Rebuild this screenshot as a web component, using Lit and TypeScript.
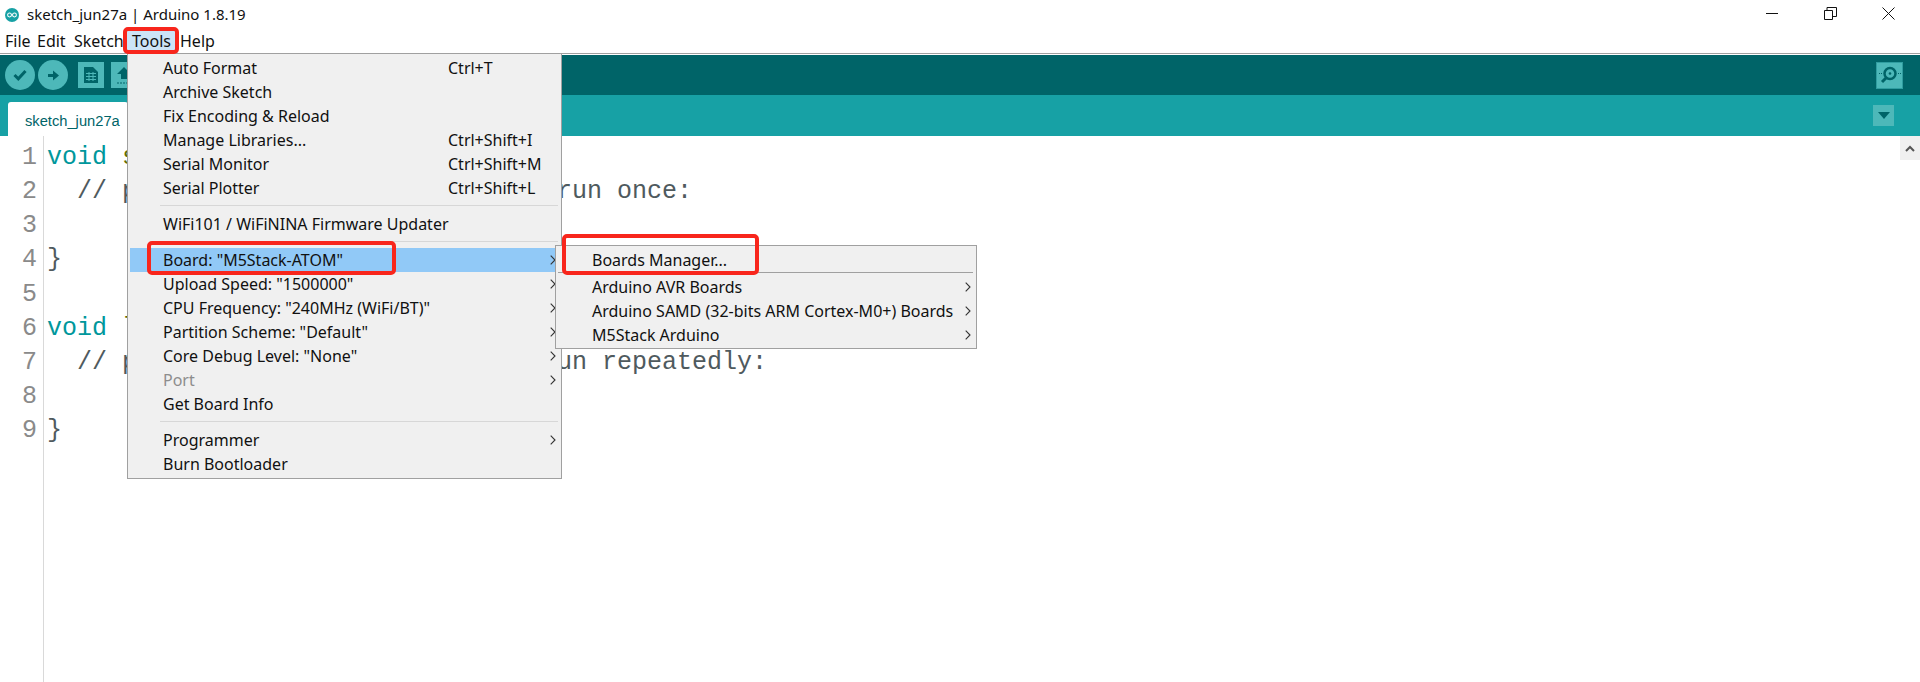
import { LitElement, html, css, svg } from "lit";
import { customElement } from "lit/decorators.js";

type Item = { t?: string; k?: string; sub?: boolean; sep?: boolean; hl?: boolean; dis?: boolean };

const TOOLS: Item[] = [
  { t: "Auto Format", k: "Ctrl+T" },
  { t: "Archive Sketch" },
  { t: "Fix Encoding & Reload" },
  { t: "Manage Libraries...", k: "Ctrl+Shift+I" },
  { t: "Serial Monitor", k: "Ctrl+Shift+M" },
  { t: "Serial Plotter", k: "Ctrl+Shift+L" },
  { sep: true },
  { t: "WiFi101 / WiFiNINA Firmware Updater" },
  { sep: true },
  { t: 'Board: "M5Stack-ATOM"', sub: true, hl: true },
  { t: 'Upload Speed: "1500000"', sub: true },
  { t: 'CPU Frequency: "240MHz (WiFi/BT)"', sub: true },
  { t: 'Partition Scheme: "Default"', sub: true },
  { t: 'Core Debug Level: "None"', sub: true },
  { t: "Port", sub: true, dis: true },
  { t: "Get Board Info" },
  { sep: true },
  { t: "Programmer", sub: true },
  { t: "Burn Bootloader" },
];

const BOARDS: Item[] = [
  { t: "Boards Manager..." },
  { sep: true },
  { t: "Arduino AVR Boards", sub: true },
  { t: "Arduino SAMD (32-bits ARM Cortex-M0+) Boards", sub: true },
  { t: "M5Stack Arduino", sub: true },
];

const chevron = svg`<path d="M.7.7l4.3 4.3L.7 9.300" fill="none" stroke="currentColor" stroke-width="1.100"/>`;

@customElement("app-root")
export class AppRoot extends LitElement {
  static styles = css`
    :host { display: block; position: relative; width: 1920px; height: 682px; overflow: hidden; background: #fff; font-family: "Noto Sans", sans-serif; color: #111; }
    .titlebar { height: 29px; display: flex; align-items: center; }
    .logo { margin-left: 5px; width: 14px; height: 14px; }
    .title { margin-left: 8px; font-size: 15px; line-height: 29px; }
    .spacer { flex: 1; }
    .winbtn { display: block; }
    .winbtns { display: flex; align-items: center; gap: 45px; margin-right: 25px; margin-top: -2px; }
    .menubar { height: 24px; display: flex; font-size: 16px; line-height: 24px; padding-left: 5px; border-bottom: 1px solid #a0a0a0; }
    .menubar span { display: block; }
    .m-file { width: 32px; } .m-edit { width: 37px; } .m-sketch { width: 50px; }
    .m-tools { width: 54px; padding-left: 8px; margin-right: 2px; background: #cce4f7; box-sizing: border-box; }
    .gap { height: 1px; }
    .toolbar { height: 40px; background: #006468; display: flex; align-items: center; padding-left: 5px; }
    .round { width: 30px; height: 30px; border-radius: 50%; background: #4db8b9; margin-right: 3px; display: flex; align-items: center; justify-content: center; }
    .sq { width: 26px; height: 26px; background: #4db8b9; margin-left: 7px; display: flex; align-items: center; justify-content: center; }
    .sermon { width: 27px; height: 27px; background: #4db8b9; margin-right: 17px; display: flex; align-items: center; justify-content: center; border: 1px solid #2f9da0; box-sizing: border-box; }
    .tabbar { height: 41px; background: #17a1a5; display: flex; align-items: flex-end; }
    .tab { margin-left: 8px; width: 120px; height: 34px; background: #fff; border-radius: 3px 3px 0 0; color: #006468; font: 14.700px/34px "Liberation Sans", sans-serif; padding: 2px 0 0 17px; box-sizing: border-box; white-space: nowrap; }
    .tabmenu { width: 21px; height: 21px; background: #4db8b9; margin: 0 26px 10px 0; display: flex; align-items: center; justify-content: center; }
    .editor { display: flex; height: 546px; }
    .gutter { width: 43px; border-right: 1px solid #d9d9d9; padding-top: 5px; flex: none; }
    .num { height: 34.150px; font: 25px/34.150px "Liberation Mono", monospace; color: #8a8a8a; text-align: right; padding-right: 6px; }
    .code { flex: 1; padding: 5px 0 0 3px; font: 25px/34.150px "Liberation Mono", monospace; color: #4f5a5e; white-space: pre; }
    .line { height: 34.150px; }
    .kw { color: #00979c; } .fn { color: #5e6d03; }
    .scroll { width: 20px; height: 24px; background: #f0f0f0; display: flex; align-items: center; justify-content: center; flex: none; }
    .menu { position: absolute; background: #f0f0f0; border: 1px solid #a0a0a0; box-sizing: border-box; font-size: 16px; color: #111; }
    .tools { left: 127px; top: 53px; width: 435px; height: 426px; padding: 2px 2px 0 2px; }
    .boards { left: 555px; top: 245px; width: 422px; height: 104px; padding: 2px 2px 0 2px; }
    .row { height: 24px; line-height: 24px; padding-left: 33px; position: relative; white-space: nowrap; }
    .row.hl { background: #91c9f7; }
    .row.dis { color: #8d8d8d; }
    .key { position: absolute; left: 318px; top: 0; }
    .boards .row { padding-left: 34px; }
    .chev { position: absolute; right: 3px; top: 7px; width: 6px; height: 10px; color: #333; }
    .sep { height: 1px; background: #d7d7d7; margin: 5px 1px 6px 30px; }
    .boards .sep { margin: 0 1px 2px 0; background: #a0a0a0; }
    .mark { position: absolute; border: 4px solid #f8261c; border-radius: 5px; box-sizing: border-box; pointer-events: none; }
    .mark.a { left: 123px; top: 27px; width: 56px; height: 27px; }
    .mark.b { left: 147px; top: 241px; width: 249px; height: 34px; }
    .mark.c { left: 562px; top: 234px; width: 197px; height: 41px; }
  `;

  private rows(items: Item[]) {
    return items.map((i) =>
      i.sep
        ? html`<div class="sep"></div>`
        : html`<div class="row ${i.hl ? "hl" : ""} ${i.dis ? "dis" : ""}">
            <span>${i.t}</span>
            ${i.k ? html`<span class="key">${i.k}</span>` : ""}
            ${i.sub ? html`<svg class="chev" viewBox="0 0 6 10">${chevron}</svg>` : ""}
          </div>`
    );
  }

  render() {
    return html`
      <div class="titlebar">
        <svg class="logo" viewBox="0 0 16 16">
          <circle cx="8" cy="8" r="8" fill="#17a1a5"/>
          <circle cx="5.200" cy="8" r="2.200" fill="none" stroke="#fff" stroke-width="1.200"/>
          <circle cx="10.800" cy="8" r="2.200" fill="none" stroke="#fff" stroke-width="1.200"/>
        </svg>
        <span class="title">sketch_jun27a | Arduino 1.8.19</span>
        <span class="spacer"></span>
        <div class="winbtns">
          <svg class="winbtn" width="13" height="13" viewBox="0 0 13 13"><path d="M0 6.500h12" stroke="#111" fill="none"/></svg>
          <svg class="winbtn" width="13" height="13" viewBox="0 0 13 13"><path d="M.5 3.500h8v9h-8zM3 3.500V.5h9.500v9h-4" stroke="#111" fill="none"/></svg>
          <svg class="winbtn" width="13" height="13" viewBox="0 0 13 13"><path d="M.5.5l12 12M12.500.5l-12 12" stroke="#111" fill="none"/></svg>
        </div>
      </div>
      <div class="menubar">
        <span class="m-file">File</span><span class="m-edit">Edit</span><span class="m-sketch">Sketch</span><span class="m-tools">Tools</span><span>Help</span>
      </div>
      <div class="gap"></div>
      <div class="toolbar">
        <div class="round"><svg width="14" height="12" viewBox="0 0 14 12"><path d="M1.500 6l3.800 3.800L12.500 2" fill="none" stroke="#006468" stroke-width="3"/></svg></div>
        <div class="round"><svg width="13" height="13" viewBox="0 0 13 13"><path d="M1 5h5V1.500l6 5-6 5V8H1z" fill="#006468"/></svg></div>
        <div class="sq"><svg width="14" height="16" viewBox="0 0 14 16"><path d="M0 0h9l5 5v11H0z" fill="#006468"/><path d="M2 6.500h10M2 9.500h10M2 12.500h10M5 5v9M9 5v9" stroke="#4db8b9"/></svg></div>
        <div class="sq"><svg width="18" height="20" viewBox="0 0 18 20"><path d="M9 2l7 7h-4v5H6V9H2z" fill="#006468"/><path d="M2 18h14" stroke="#006468" stroke-dasharray="2 1"/></svg></div>
        <span class="spacer"></span>
        <div class="sermon"><svg width="22" height="22" viewBox="0 0 22 22">
          <circle cx="11" cy="9.500" r="5.500" fill="none" stroke="#006468" stroke-width="2.500"/>
          <circle cx="11" cy="9.500" r="1.300" fill="#006468"/>
          <path d="M7 14l-4 4" stroke="#006468" stroke-width="3"/>
          <path d="M0 9.500h3M19 9.500h3" stroke="#006468" stroke-dasharray="1 1"/>
        </svg></div>
      </div>
      <div class="tabbar">
        <div class="tab">sketch_jun27a</div>
        <span class="spacer"></span>
        <div class="tabmenu"><svg width="12" height="7" viewBox="0 0 12 7"><path d="M0 0h12L6 7z" fill="#006468"/></svg></div>
      </div>
      <div class="editor">
        <div class="gutter">${[1, 2, 3, 4, 5, 6, 7, 8, 9].map((n) => html`<div class="num">${n}</div>`)}</div>
        <div class="code"><div class="line"><span class="kw">void</span> <span class="fn">setup</span>() {</div><div class="line">  // put your setup code here, to run once:</div><div class="line"></div><div class="line">}</div><div class="line"></div><div class="line"><span class="kw">void</span> <span class="fn">loop</span>() {</div><div class="line">  // put your main code here, to run repeatedly:</div><div class="line"></div><div class="line">}</div></div>
        <div class="scroll"><svg width="10" height="7" viewBox="0 0 10 7"><path d="M1 6l4-4 4 4" fill="none" stroke="#555" stroke-width="2"/></svg></div>
      </div>
      <div class="menu tools">${this.rows(TOOLS)}</div>
      <div class="menu boards">${this.rows(BOARDS)}</div>
      <div class="mark a"></div>
      <div class="mark b"></div>
      <div class="mark c"></div>
    `;
  }
}
